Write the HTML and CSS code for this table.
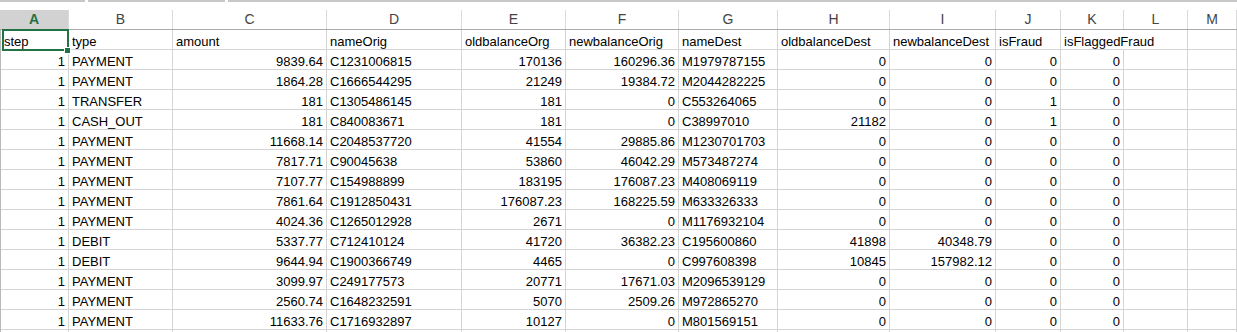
FILE: index.html
```html
<!DOCTYPE html>
<html>
<head>
<meta charset="utf-8">
<link rel="stylesheet" href="styles.css">
</head>
<body>
<div class="topbar">
  <div class="seg seg1"></div>
  <div class="seg seg2"></div>
  <div class="seg seg3"></div>
</div>
<div class="hdr">
  <div class="h sel">A</div><div class="h">B</div><div class="h">C</div><div class="h">D</div><div class="h">E</div><div class="h">F</div><div class="h">G</div><div class="h">H</div><div class="h">I</div><div class="h">J</div><div class="h">K</div><div class="h">L</div><div class="h">M</div>
</div>
<div class="rows">
  <div class="row"><div class="c active">step</div><div class="c">type</div><div class="c">amount</div><div class="c">nameOrig</div><div class="c">oldbalanceOrg</div><div class="c">newbalanceOrig</div><div class="c">nameDest</div><div class="c">oldbalanceDest</div><div class="c">newbalanceDest</div><div class="c">isFraud</div><div class="c spill">isFlaggedFraud</div><div class="c"></div><div class="c"></div></div>
  <div class="row"><div class="n">1</div><div class="c">PAYMENT</div><div class="n">9839.64</div><div class="c">C1231006815</div><div class="n">170136</div><div class="n">160296.36</div><div class="c">M1979787155</div><div class="n">0</div><div class="n">0</div><div class="n">0</div><div class="n">0</div><div class="c"></div><div class="c"></div></div>
  <div class="row"><div class="n">1</div><div class="c">PAYMENT</div><div class="n">1864.28</div><div class="c">C1666544295</div><div class="n">21249</div><div class="n">19384.72</div><div class="c">M2044282225</div><div class="n">0</div><div class="n">0</div><div class="n">0</div><div class="n">0</div><div class="c"></div><div class="c"></div></div>
  <div class="row"><div class="n">1</div><div class="c">TRANSFER</div><div class="n">181</div><div class="c">C1305486145</div><div class="n">181</div><div class="n">0</div><div class="c">C553264065</div><div class="n">0</div><div class="n">0</div><div class="n">1</div><div class="n">0</div><div class="c"></div><div class="c"></div></div>
  <div class="row"><div class="n">1</div><div class="c">CASH_OUT</div><div class="n">181</div><div class="c">C840083671</div><div class="n">181</div><div class="n">0</div><div class="c">C38997010</div><div class="n">21182</div><div class="n">0</div><div class="n">1</div><div class="n">0</div><div class="c"></div><div class="c"></div></div>
  <div class="row"><div class="n">1</div><div class="c">PAYMENT</div><div class="n">11668.14</div><div class="c">C2048537720</div><div class="n">41554</div><div class="n">29885.86</div><div class="c">M1230701703</div><div class="n">0</div><div class="n">0</div><div class="n">0</div><div class="n">0</div><div class="c"></div><div class="c"></div></div>
  <div class="row"><div class="n">1</div><div class="c">PAYMENT</div><div class="n">7817.71</div><div class="c">C90045638</div><div class="n">53860</div><div class="n">46042.29</div><div class="c">M573487274</div><div class="n">0</div><div class="n">0</div><div class="n">0</div><div class="n">0</div><div class="c"></div><div class="c"></div></div>
  <div class="row"><div class="n">1</div><div class="c">PAYMENT</div><div class="n">7107.77</div><div class="c">C154988899</div><div class="n">183195</div><div class="n">176087.23</div><div class="c">M408069119</div><div class="n">0</div><div class="n">0</div><div class="n">0</div><div class="n">0</div><div class="c"></div><div class="c"></div></div>
  <div class="row"><div class="n">1</div><div class="c">PAYMENT</div><div class="n">7861.64</div><div class="c">C1912850431</div><div class="n">176087.23</div><div class="n">168225.59</div><div class="c">M633326333</div><div class="n">0</div><div class="n">0</div><div class="n">0</div><div class="n">0</div><div class="c"></div><div class="c"></div></div>
  <div class="row"><div class="n">1</div><div class="c">PAYMENT</div><div class="n">4024.36</div><div class="c">C1265012928</div><div class="n">2671</div><div class="n">0</div><div class="c">M1176932104</div><div class="n">0</div><div class="n">0</div><div class="n">0</div><div class="n">0</div><div class="c"></div><div class="c"></div></div>
  <div class="row"><div class="n">1</div><div class="c">DEBIT</div><div class="n">5337.77</div><div class="c">C712410124</div><div class="n">41720</div><div class="n">36382.23</div><div class="c">C195600860</div><div class="n">41898</div><div class="n">40348.79</div><div class="n">0</div><div class="n">0</div><div class="c"></div><div class="c"></div></div>
  <div class="row"><div class="n">1</div><div class="c">DEBIT</div><div class="n">9644.94</div><div class="c">C1900366749</div><div class="n">4465</div><div class="n">0</div><div class="c">C997608398</div><div class="n">10845</div><div class="n">157982.12</div><div class="n">0</div><div class="n">0</div><div class="c"></div><div class="c"></div></div>
  <div class="row"><div class="n">1</div><div class="c">PAYMENT</div><div class="n">3099.97</div><div class="c">C249177573</div><div class="n">20771</div><div class="n">17671.03</div><div class="c">M2096539129</div><div class="n">0</div><div class="n">0</div><div class="n">0</div><div class="n">0</div><div class="c"></div><div class="c"></div></div>
  <div class="row"><div class="n">1</div><div class="c">PAYMENT</div><div class="n">2560.74</div><div class="c">C1648232591</div><div class="n">5070</div><div class="n">2509.26</div><div class="c">M972865270</div><div class="n">0</div><div class="n">0</div><div class="n">0</div><div class="n">0</div><div class="c"></div><div class="c"></div></div>
  <div class="row"><div class="n">1</div><div class="c">PAYMENT</div><div class="n">11633.76</div><div class="c">C1716932897</div><div class="n">10127</div><div class="n">0</div><div class="c">M801569151</div><div class="n">0</div><div class="n">0</div><div class="n">0</div><div class="n">0</div><div class="c"></div><div class="c"></div></div>
  <div class="row"><div class="n"></div><div class="c"></div><div class="n"></div><div class="c"></div><div class="n"></div><div class="n"></div><div class="c"></div><div class="n"></div><div class="n"></div><div class="n"></div><div class="n"></div><div class="c"></div><div class="c"></div></div>
</div>
</body>
</html>
```

FILE: styles.css
```css
html, body {
  margin: 0;
  padding: 0;
  background: #ffffff;
  overflow: hidden;
}

body {
  width: 1237px;
  height: 332px;
  font-family: "Liberation Sans", Arial, sans-serif;
  font-size: 13px;
  color: #000000;
}

.topbar {
  height: 10px;
  display: flex;
  gap: 3px;
  align-items: flex-start;
}

.seg {
  height: 2px;
  background: #c8c8c8;
}

.seg1 { width: 85px; }
.seg2 { width: 137px; }
.seg3 { flex: 1; }

.hdr {
  display: grid;
  grid-template-columns: 69px 104px 154px 135px 104px 113px 99px 112px 106px 65px 63px 64px 1fr;
  border-bottom: 1px solid #ababab;
  height: 19px;
}

.h {
  border-right: 1px solid #dadada;
  text-align: center;
  line-height: 19px;
  font-size: 14px;
  color: #444444;
}

.h.sel {
  background: #d2d2d2;
  color: #217346;
  font-weight: bold;
}

.rows {
  border-left: 1px solid #b8b8b8;
}

.row {
  display: grid;
  grid-template-columns: 68px 104px 154px 135px 104px 113px 99px 112px 106px 65px 63px 64px 1fr;
  height: 20px;
}

.c, .n {
  height: 19px;
  border-right: 1px solid #d4d4d4;
  border-bottom: 1px solid #d4d4d4;
  padding: 5px 3px 0 3px;
  box-sizing: border-box;
  height: 20px;
  line-height: 14px;
  white-space: nowrap;
  overflow: visible;
}

.n {
  text-align: right;
}

.spill {
  border-right-color: transparent;
}

.active {
  position: relative;
}

.active::before {
  content: "";
  position: absolute;
  left: 1px;
  top: -1px;
  width: 67px;
  height: 22px;
  border: 2px solid #217346;
  box-sizing: border-box;
}

.active::after {
  content: "";
  position: absolute;
  left: 64px;
  top: 18px;
  width: 5px;
  height: 5px;
  background: #217346;
  box-shadow: 0 0 0 1px #ffffff;
}
```
